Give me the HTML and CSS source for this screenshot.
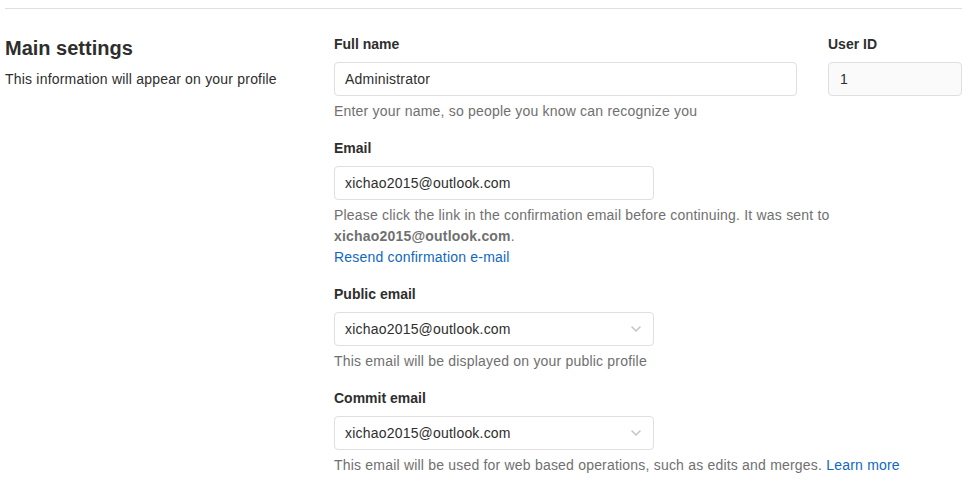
FILE: index.html
```html
<!DOCTYPE html>
<html>
<head>
<meta charset="utf-8">
<link rel="stylesheet" href="styles.css">
</head>
<body>
<div class="page">
  <hr class="divider">
  <section class="settings">
    <div class="sidebar">
      <h4 class="sidebar-title">Main settings</h4>
      <p class="sidebar-desc">This information will appear on your profile</p>
    </div>
    <div class="fields">
      <div class="name-row">
        <div class="group">
          <label class="label">Full name</label>
          <div class="input">Administrator</div>
          <div class="help">Enter your name, so people you know can recognize you</div>
        </div>
        <div class="group">
          <label class="label">User ID</label>
          <div class="input readonly">1</div>
        </div>
      </div>
      <div class="group">
        <label class="label">Email</label>
        <div class="input narrow">xichao2015@outlook.com</div>
        <div class="help">Please click the link in the confirmation email before continuing. It was sent to <strong class="strong">xichao2015@outlook.com</strong>.<br><a class="link" href="#">Resend confirmation e-mail</a></div>
      </div>
      <div class="group">
        <label class="label">Public email</label>
        <div class="input narrow select">xichao2015@outlook.com<svg class="chevron" width="10" height="6" viewBox="0 0 10 6"><path d="M1 1l4 4 4-4" fill="none" stroke="#c4c4c4" stroke-width="1.5" stroke-linecap="round" stroke-linejoin="round"/></svg></div>
        <div class="help">This email will be displayed on your public profile</div>
      </div>
      <div class="group">
        <label class="label">Commit email</label>
        <div class="input narrow select">xichao2015@outlook.com<svg class="chevron" width="10" height="6" viewBox="0 0 10 6"><path d="M1 1l4 4 4-4" fill="none" stroke="#c4c4c4" stroke-width="1.5" stroke-linecap="round" stroke-linejoin="round"/></svg></div>
        <div class="help">This email will be used for web based operations, such as edits and merges. <a class="link" href="#">Learn more</a></div>
      </div>
    </div>
  </section>
</div>
</body>
</html>
```
FILE: styles.css
```css
html, body {
  margin: 0;
  padding: 0;
  background: #fff;
}
body {
  font-family: "Liberation Sans", Arial, sans-serif;
  font-size: 14px;
  line-height: 21px;
  letter-spacing: 0.2px;
  color: #2e2e2e;
}
.page {
  padding: 0 10px 0 5px;
}
.divider {
  border: 0;
  border-top: 1px solid #dfdfdf;
  margin: 8px 0 0 0;
  height: 0;
}
.settings {
  display: grid;
  grid-template-columns: 329px 1fr;
  padding-top: 25px;
}
.sidebar-title {
  margin: 2px 0 0 0;
  font-size: 20px;
  line-height: 24px;
  font-weight: 700;
  letter-spacing: 0;
  color: #2e2e2e;
}
.sidebar-desc {
  margin: 9px 0 0 0;
  font-size: 14px;
  line-height: 21px;
  color: #2e2e2e;
}
.name-row {
  display: grid;
  grid-template-columns: 463px 134px;
  column-gap: 31px;
}
.group {
  display: flex;
  flex-direction: column;
  margin-bottom: 16px;
}
.label {
  font-weight: 700;
  color: #2e2e2e;
  letter-spacing: 0;
  margin-bottom: 7px;
}
.input {
  box-sizing: border-box;
  height: 34px;
  border: 1px solid #dfdfdf;
  border-radius: 4px;
  padding: 0 10px;
  display: flex;
  align-items: center;
  color: #2e2e2e;
  background: #fff;
}
.input.readonly {
  background: #fafafa;
  padding-left: 11px;
}
.input.narrow {
  width: 320px;
}
.input.select {
  justify-content: space-between;
  padding-right: 12px;
}
.chevron {
  display: block;
}
.help {
  margin-top: 5px;
  color: #707070;
}
.strong {
  font-weight: 700;
  color: #707070;
}
.link {
  color: #1068bf;
  text-decoration: none;
}
```
